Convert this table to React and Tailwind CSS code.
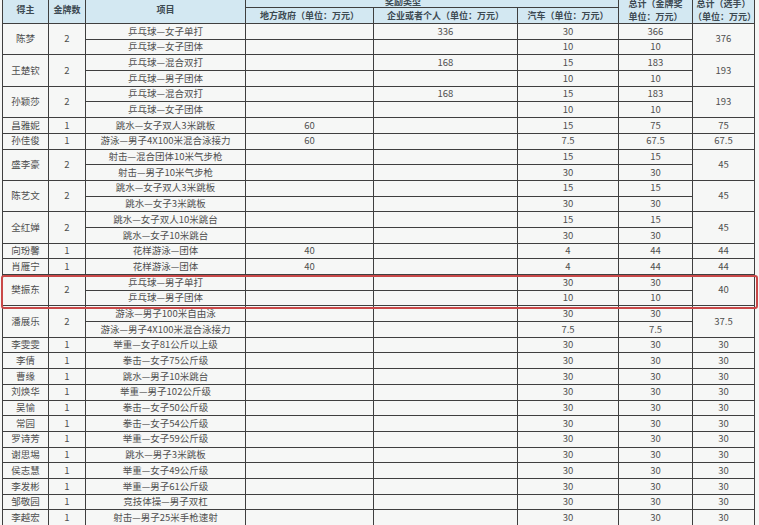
import React from "react";

const groups = [
  { name: "陈梦", count: 2, sum: "376", items: [
    { event: "乒乓球—女子单打", gov: "", corp: "336", car: "30", total: "366" },
    { event: "乒乓球—女子团体", gov: "", corp: "", car: "10", total: "10" },
  ] },
  { name: "王楚钦", count: 2, sum: "193", items: [
    { event: "乒乓球—混合双打", gov: "", corp: "168", car: "15", total: "183" },
    { event: "乒乓球—男子团体", gov: "", corp: "", car: "10", total: "10" },
  ] },
  { name: "孙颖莎", count: 2, sum: "193", items: [
    { event: "乒乓球—混合双打", gov: "", corp: "168", car: "15", total: "183" },
    { event: "乒乓球—女子团体", gov: "", corp: "", car: "10", total: "10" },
  ] },
  { name: "昌雅妮", count: 1, sum: "75", items: [
    { event: "跳水—女子双人3米跳板", gov: "60", corp: "", car: "15", total: "75" },
  ] },
  { name: "孙佳俊", count: 1, sum: "67.5", items: [
    { event: "游泳—男子4X100米混合泳接力", gov: "60", corp: "", car: "7.5", total: "67.5" },
  ] },
  { name: "盛李豪", count: 2, sum: "45", items: [
    { event: "射击—混合团体10米气步枪", gov: "", corp: "", car: "15", total: "15" },
    { event: "射击—男子10米气步枪", gov: "", corp: "", car: "30", total: "30" },
  ] },
  { name: "陈艺文", count: 2, sum: "45", items: [
    { event: "跳水—女子双人3米跳板", gov: "", corp: "", car: "15", total: "15" },
    { event: "跳水—女子3米跳板", gov: "", corp: "", car: "30", total: "30" },
  ] },
  { name: "全红婵", count: 2, sum: "45", items: [
    { event: "跳水—女子双人10米跳台", gov: "", corp: "", car: "15", total: "15" },
    { event: "跳水—女子10米跳台", gov: "", corp: "", car: "30", total: "30" },
  ] },
  { name: "向玢馨", count: 1, sum: "44", items: [
    { event: "花样游泳—团体", gov: "40", corp: "", car: "4", total: "44" },
  ] },
  { name: "肖雁宁", count: 1, sum: "44", items: [
    { event: "花样游泳—团体", gov: "40", corp: "", car: "4", total: "44" },
  ] },
  { name: "樊振东", count: 2, sum: "40", items: [
    { event: "乒乓球—男子单打", gov: "", corp: "", car: "30", total: "30" },
    { event: "乒乓球—男子团体", gov: "", corp: "", car: "10", total: "10" },
  ] },
  { name: "潘展乐", count: 2, sum: "37.5", items: [
    { event: "游泳—男子100米自由泳", gov: "", corp: "", car: "30", total: "30" },
    { event: "游泳—男子4X100米混合泳接力", gov: "", corp: "", car: "7.5", total: "7.5" },
  ] },
  ...[
    ["李雯雯", "举重—女子81公斤以上级"],
    ["李倩", "拳击—女子75公斤级"],
    ["曹缘", "跳水—男子10米跳台"],
    ["刘焕华", "举重—男子102公斤级"],
    ["吴愉", "拳击—女子50公斤级"],
    ["常园", "拳击—女子54公斤级"],
    ["罗诗芳", "举重—女子59公斤级"],
    ["谢思埸", "跳水—男子3米跳板"],
    ["侯志慧", "举重—女子49公斤级"],
    ["李发彬", "举重—男子61公斤级"],
    ["邹敬园", "竞技体操—男子双杠"],
    ["李越宏", "射击—男子25米手枪速射"],
  ].map(([name, event]) => ({
    name, count: 1, sum: "30",
    items: [{ event, gov: "", corp: "", car: "30", total: "30" }],
  })),
];

const cell = "border border-[#3f3f3f] p-0 text-center align-middle";
const head = cell + " bg-[#d3e8f2] font-bold text-[#3d4a52]";

export default function App() {
  return (
    <div
      className="relative w-[759px] h-[525px] overflow-hidden bg-[#f6f7f6]"
      style={{ fontFamily: '"Noto Sans CJK SC", "Noto Sans", sans-serif' }}
    >
      <table className="table-fixed border-collapse mt-[-5px] ml-[2px] w-[752px] text-[9.5px] leading-none text-[#4f4f4f]">
        <colgroup>
          <col className="w-[46px]" />
          <col className="w-[37px]" />
          <col className="w-[160px]" />
          <col className="w-[128px]" />
          <col className="w-[144px]" />
          <col className="w-[101px]" />
          <col className="w-[74px]" />
          <col className="w-[62px]" />
        </colgroup>
        <thead className="text-[9px]">
          <tr className="h-[12px]">
            <th rowSpan={2} className={head}>得主</th>
            <th rowSpan={2} className={head}>金牌数</th>
            <th rowSpan={2} className={head}>项目</th>
            <th colSpan={3} className={head + " pr-[58px]"}>奖励类型</th>
            <th rowSpan={2} className={head + " leading-[13px]"}>
              总计（金牌奖<br />单位：万元）
            </th>
            <th rowSpan={2} className={head + " leading-[13px]"}>
              <div className="overflow-hidden whitespace-nowrap">
                总计（选手）<br />（单位：万元）
              </div>
            </th>
          </tr>
          <tr className="h-[16px]">
            <th className={head}>地方政府（单位：万元）</th>
            <th className={head}>企业或者个人（单位：万元）</th>
            <th className={head}>汽车（单位：万元）</th>
          </tr>
        </thead>
        <tbody>
          {groups.map((g) =>
            g.items.map((it, i) => (
              <tr key={g.name + i} className="h-[15.7px]">
                {i === 0 && (
                  <td rowSpan={g.items.length} className={cell}>{g.name}</td>
                )}
                {i === 0 && (
                  <td rowSpan={g.items.length} className={cell}>{g.count}</td>
                )}
                <td className={cell}>{it.event}</td>
                <td className={cell}>{it.gov}</td>
                <td className={cell}>{it.corp}</td>
                <td className={cell}>{it.car}</td>
                <td className={cell}>{it.total}</td>
                {i === 0 && (
                  <td rowSpan={g.items.length} className={cell}>{g.sum}</td>
                )}
              </tr>
            ))
          )}
        </tbody>
      </table>

      {/* highlight around 樊振东 */}
      <div className="absolute left-[1px] top-[275px] w-[757px] h-[34px] rounded-[3px] border-2 border-[#c94848]" />
    </div>
  );
}
